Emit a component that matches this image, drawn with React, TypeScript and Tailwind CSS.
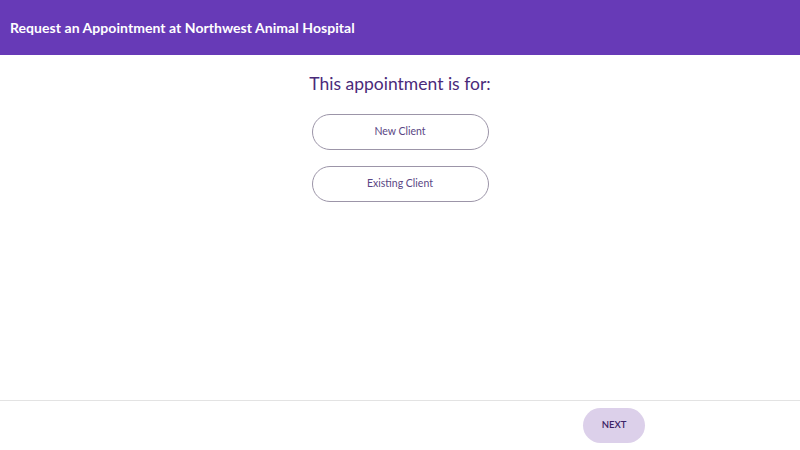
export default function App() {
  return (
    <div className="h-[450px] w-full flex flex-col bg-white font-['Lato','Noto_Sans',sans-serif]">
      <header className="h-[55px] shrink-0 bg-[#673ab7] flex items-center px-[10px]">
        <h1 className="text-white font-bold text-[14px] tracking-[0.05px] leading-none">
          Request an Appointment at Northwest Animal Hospital
        </h1>
      </header>

      <main className="flex-1 flex flex-col items-center">
        <h2 className="mt-[18px] text-[17.5px] text-[#4a2a7a] leading-[22px]">This appointment is for:</h2>
        <div className="mt-[19px] flex flex-col gap-[16px]">
          <button className="w-[177px] h-[36px] rounded-full border border-[#9c95a8] text-[10.5px] text-[#5a4684]">
            New Client
          </button>
          <button className="w-[177px] h-[36px] rounded-full border border-[#9c95a8] text-[10.5px] text-[#5a4684]">
            Existing Client
          </button>
        </div>
      </main>

      <footer className="h-[50px] shrink-0 border-t border-[#e3e3e3] flex items-center justify-end pr-[155px]">
        <button className="w-[62px] h-[35px] rounded-full bg-[#dcd0ea] text-[9.5px] font-semibold text-[#3c2266]">
          NEXT
        </button>
      </footer>
    </div>
  );
}
